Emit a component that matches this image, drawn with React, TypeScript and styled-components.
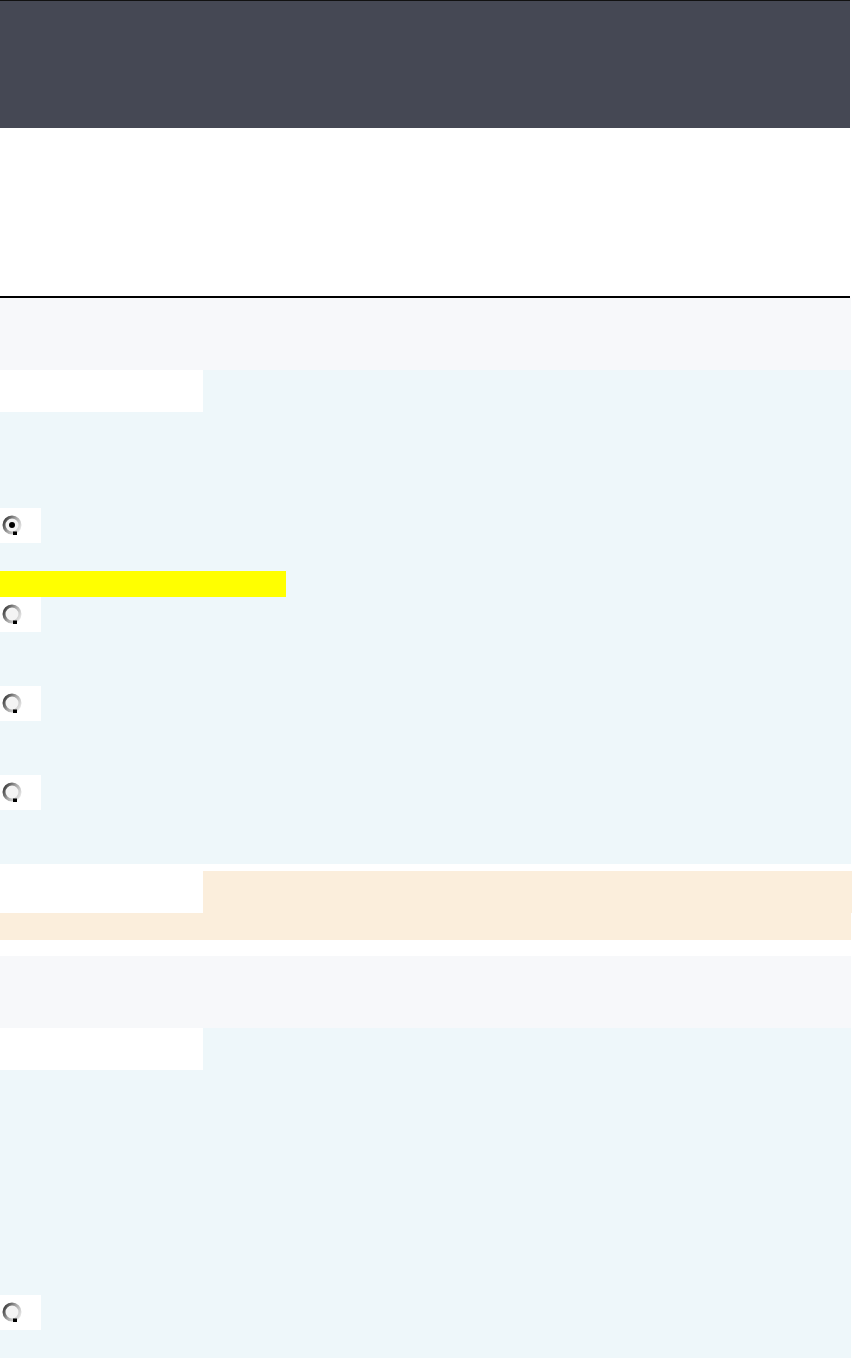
import React from "react";
import styled, { createGlobalStyle } from "styled-components";

const GlobalStyle = createGlobalStyle`
  html, body {
    margin: 0;
    padding: 0;
    background: #ffffff;
    font-family: "Liberation Sans", Arial, sans-serif;
  }
`;

interface IChoice {
  checked?: boolean;
  highlighted?: boolean;
  gapAfter: number;
}

const firstChoices: IChoice[] = [
  { checked: true, gapAfter: 28 },
  { highlighted: true, gapAfter: 54 },
  { gapAfter: 54 },
  { gapAfter: 54 },
];

const RadioMark = ({ checked }: { checked?: boolean }) => (
  <svg width="24" height="26" viewBox="0 0 24 26">
    <defs>
      <linearGradient id="ring" x1="0" y1="0.2" x2="1" y2="0.8">
        <stop offset="0" stopColor="#3e3e3e" />
        <stop offset="0.5" stopColor="#a8a8a8" />
        <stop offset="1" stopColor="#e6e6e6" />
      </linearGradient>
    </defs>
    <circle cx="11" cy="12" r="8" fill="#f4f4f4" stroke="url(#ring)" strokeWidth="3" />
    <rect x="12" y="18.5" width="4" height="3.5" fill="#000" />
    {checked && <circle cx="11" cy="12" r="3" fill="#000" />}
  </svg>
);

const Choice = (props: IChoice) => {
  const { checked, highlighted, gapAfter } = props;
  return (
    <ChoiceBlock style={{ marginBottom: gapAfter }}>
      {highlighted && <Highlight />}
      <RadioBox>
        <RadioMark checked={checked} />
      </RadioBox>
    </ChoiceBlock>
  );
};

const App = () => {
  return (
    <>
      <GlobalStyle />
      <Page>
        <Masthead />
        <Intro />
        <Rule />

        <QuestionStem />
        <AnswerPanel>
          <PanelTab />
          <ChoiceList $top={96}>
            {firstChoices.map((c, i) => (
              <Choice key={i} {...c} />
            ))}
          </ChoiceList>
        </AnswerPanel>

        <FeedbackPanel>
          <FeedbackHead>
            <PanelTab />
          </FeedbackHead>
          <FeedbackBody />
        </FeedbackPanel>

        <QuestionStem />
        <AnswerPanel>
          <PanelTab />
          <ChoiceList $top={225}>
            <Choice gapAfter={40} />
          </ChoiceList>
        </AnswerPanel>
      </Page>
    </>
  );
};
export default App;

const Page = styled.div`
  width: 852px;
  display: flex;
  flex-direction: column;
`;

const Masthead = styled.header`
  width: 850px;
  height: 127px;
  background: #454854;
  border-top: 1px solid #111111;
`;

const Intro = styled.section`
  height: 168px;
`;

const Rule = styled.hr`
  width: 850px;
  height: 2px;
  margin: 0;
  border: 0;
  background: #000000;
`;

const QuestionStem = styled.div`
  width: 851px;
  height: 72px;
  background: #f7f8fa;
`;

const AnswerPanel = styled.section`
  width: 851px;
  background: #eef7fa;
  display: flex;
  flex-direction: column;
`;

const PanelTab = styled.div`
  width: 203px;
  height: 42px;
  background: #ffffff;
`;

const ChoiceList = styled.div<{ $top: number }>`
  display: flex;
  flex-direction: column;
  padding-top: ${(p) => p.$top}px;
`;

const ChoiceBlock = styled.div`
  display: flex;
  flex-direction: column;
`;

const Highlight = styled.div`
  width: 286px;
  height: 26px;
  background: #ffff00;
`;

const RadioBox = styled.div`
  width: 41px;
  height: 35px;
  background: #ffffff;
  display: flex;
  align-items: center;
  padding-left: 1px;
  box-sizing: border-box;
`;

const FeedbackPanel = styled.section`
  margin: 7px 0 16px;
  width: 851px;
  display: flex;
  flex-direction: column;
`;

const FeedbackHead = styled.div`
  width: 852px;
  height: 42px;
  background: #fbeedc;
`;

const FeedbackBody = styled.div`
  height: 27px;
  background: #fbeedc;
`;
